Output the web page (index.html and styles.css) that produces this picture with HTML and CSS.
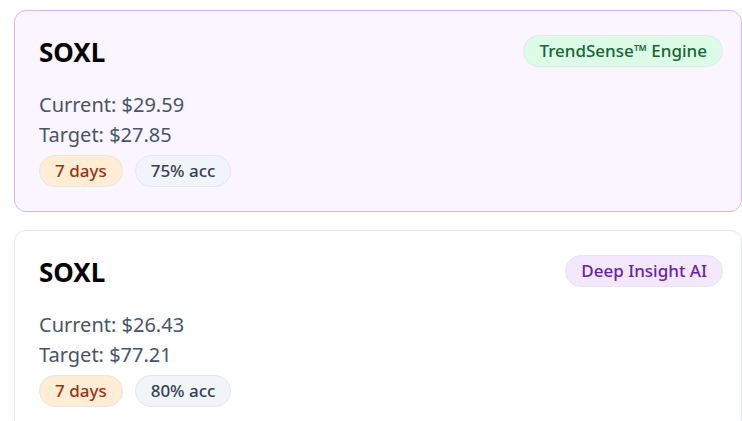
FILE: index.html
```html
<!DOCTYPE html>
<html>
<head>
<meta charset="utf-8">
<link rel="stylesheet" href="styles.css">
</head>
<body>
<div class="list">
  <div class="card card-trend">
    <div class="head">
      <div class="symbol">SOXL</div>
      <span class="engine engine-trend">TrendSense™ Engine</span>
    </div>
    <div class="line">Current: $29.59</div>
    <div class="line">Target: $27.85</div>
    <div class="tags">
      <span class="tag tag-days">7 days</span>
      <span class="tag tag-acc">75% acc</span>
    </div>
  </div>
  <div class="card card-deep">
    <div class="head">
      <div class="symbol">SOXL</div>
      <span class="engine engine-deep">Deep Insight AI</span>
    </div>
    <div class="line">Current: $26.43</div>
    <div class="line">Target: $77.21</div>
    <div class="tags">
      <span class="tag tag-days">7 days</span>
      <span class="tag tag-acc">80% acc</span>
    </div>
  </div>
</div>
</body>
</html>
```

FILE: styles.css
```css
html, body {
  margin: 0;
  padding: 0;
  background: #ffffff;
  font-family: "Noto Sans", "Open Sans", sans-serif;
}
.list {
  display: flex;
  flex-direction: column;
  gap: 18px;
  padding: 10px 0 0 14px;
}
.card {
  border: 1px solid #e5e7eb;
  border-radius: 12px;
  padding: 24px 18px 24px 24px;
  background: #ffffff;
}
.card-trend {
  background: #faf5ff;
  border-color: #d8b4fe;
}
.card-deep {
  border-color: #e6e8f0;
}
.head {
  display: flex;
  justify-content: space-between;
  align-items: flex-start;
  margin-bottom: 21px;
}
.symbol {
  font-size: 26px;
  line-height: 34px;
  font-weight: 700;
  color: #000000;
}
.engine {
  font-size: 17px;
  line-height: 22px;
  font-weight: 500;
  padding: 4px 15px;
  border-radius: 9999px;
  border: 1px solid #e5e7eb;
}
.engine-trend {
  background: #dcfce7;
  color: #166534;
}
.engine-deep {
  background: #f3e8ff;
  color: #6b21a8;
}
.line {
  font-size: 20px;
  line-height: 30px;
  color: #475569;
}
.tags {
  display: flex;
  gap: 12px;
  margin-top: 5px;
}
.tag {
  font-size: 17px;
  line-height: 22px;
  font-weight: 500;
  padding: 4px 15px;
  border-radius: 9999px;
  border: 1px solid #e5e7eb;
}
.tag-days {
  background: #ffedd5;
  color: #9a3412;
}
.tag-acc {
  background: #f1f5f9;
  color: #334155;
}
```
